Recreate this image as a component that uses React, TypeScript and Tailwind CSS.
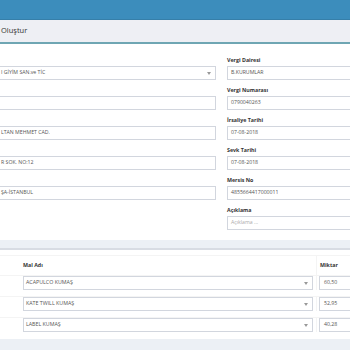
import React from "react";

const leftRows = [
  { value: "I GİYİM SAN.ve TİC", select: true },
  { value: "" },
  { value: "LTAN MEHMET CAD." },
  { value: "R SOK. NO:12" },
  { value: "ŞA-İSTANBUL" },
];

const rightRows = [
  { label: "Vergi Dairesi", value: "B.KURUMLAR" },
  { label: "Vergi Numarası", value: "0790040263" },
  { label: "İrsaliye Tarihi", value: "07-08-2018" },
  { label: "Sevk Tarihi", value: "07-08-2018" },
  { label: "Mersis No", value: "4855664417000011" },
  { label: "Açıklama", value: "", placeholder: "Açıklama ..." },
];

const items = [
  { name: "ACAPULCO KUMAŞ", qty: "60,50" },
  { name: "KATE TWILL KUMAŞ", qty: "52,95" },
  { name: "LABEL KUMAŞ", qty: "40,28" },
];

const Caret = () => (
  <svg width="4" height="3" viewBox="0 0 4 3" className="shrink-0">
    <polygon points="0,0 4,0 2,3" fill="#999" />
  </svg>
);

export default function App() {
  return (
    <div className="w-[350px] h-[350px] overflow-hidden bg-[#ecf0f5] font-['Open_Sans',sans-serif] text-[#333]">
      {/* top bar */}
      <div className="h-[20px] bg-[#3c8dbc] border-b border-[#367fa9]" />
      <div className="h-[22px] flex items-center pl-[1px] text-[7.5px] bg-[#eeeff4]">Oluştur</div>

      {/* form box */}
      <div className="h-[198px] bg-white border-t-2 border-[#6fa6b3] flex pt-[12px]">
        <div className="ml-[-4px] w-[220px] shrink-0 pt-[10px] flex flex-col gap-[16px]">
          {leftRows.map((r, i) => (
            <div
              key={i}
              className="h-[14px] border border-[#d2d6de] pl-[4px] pr-[4px] flex items-center justify-between text-[5.2px] text-[#555]"
            >
              <span>{r.value}</span>
              {r.select && <Caret />}
            </div>
          ))}
        </div>
        <div className="ml-[11px] w-[140px] shrink-0 flex flex-col gap-[6px]">
          {rightRows.map((r) => (
            <div key={r.label} className="flex flex-col">
              <div className="h-[8px] leading-[8px] text-[5.3px] font-bold">{r.label}</div>
              <div className="mt-[2px] h-[14px] border border-[#d2d6de] pl-[3px] flex items-center text-[5.2px] text-[#555]">
                {r.value || <span className="text-[#aaa]">{r.placeholder}</span>}
              </div>
            </div>
          ))}
        </div>
      </div>

      {/* items box */}
      <div className="mt-[8px] h-[91px] bg-white border-t-2 border-[#d8dce3] pt-[5px]">
        <div className="border-t border-[#f4f4f4]">
          <div className="flex h-[19px] items-center">
            <div className="w-[20px] shrink-0" />
            <div className="w-[296px] shrink-0 pl-[3px] text-[5.3px] font-bold">Mal Adı</div>
            <div className="pl-[3px] text-[5.3px] font-bold border-l border-[#f4f4f4] h-full flex items-center">Miktar</div>
          </div>
          {items.map((it) => (
            <div key={it.name} className="flex border-t border-[#f4f4f4] pb-[6px]">
              <div className="w-[20px] shrink-0" />
              <div className="w-[296px] shrink-0 px-[3px]">
                <div className="h-[14px] border border-[#d2d6de] pl-[2px] pr-[4px] flex items-center justify-between text-[5.3px] text-[#555]">
                  <span>{it.name}</span>
                  <Caret />
                </div>
              </div>
              <div className="pl-[2px] border-l border-[#f4f4f4]">
                <div className="w-[60px] h-[14px] border border-[#d2d6de] pl-[4px] flex items-center text-[5.2px] text-[#555]">
                  {it.qty}
                </div>
              </div>
            </div>
          ))}
        </div>
      </div>
    </div>
  );
}
